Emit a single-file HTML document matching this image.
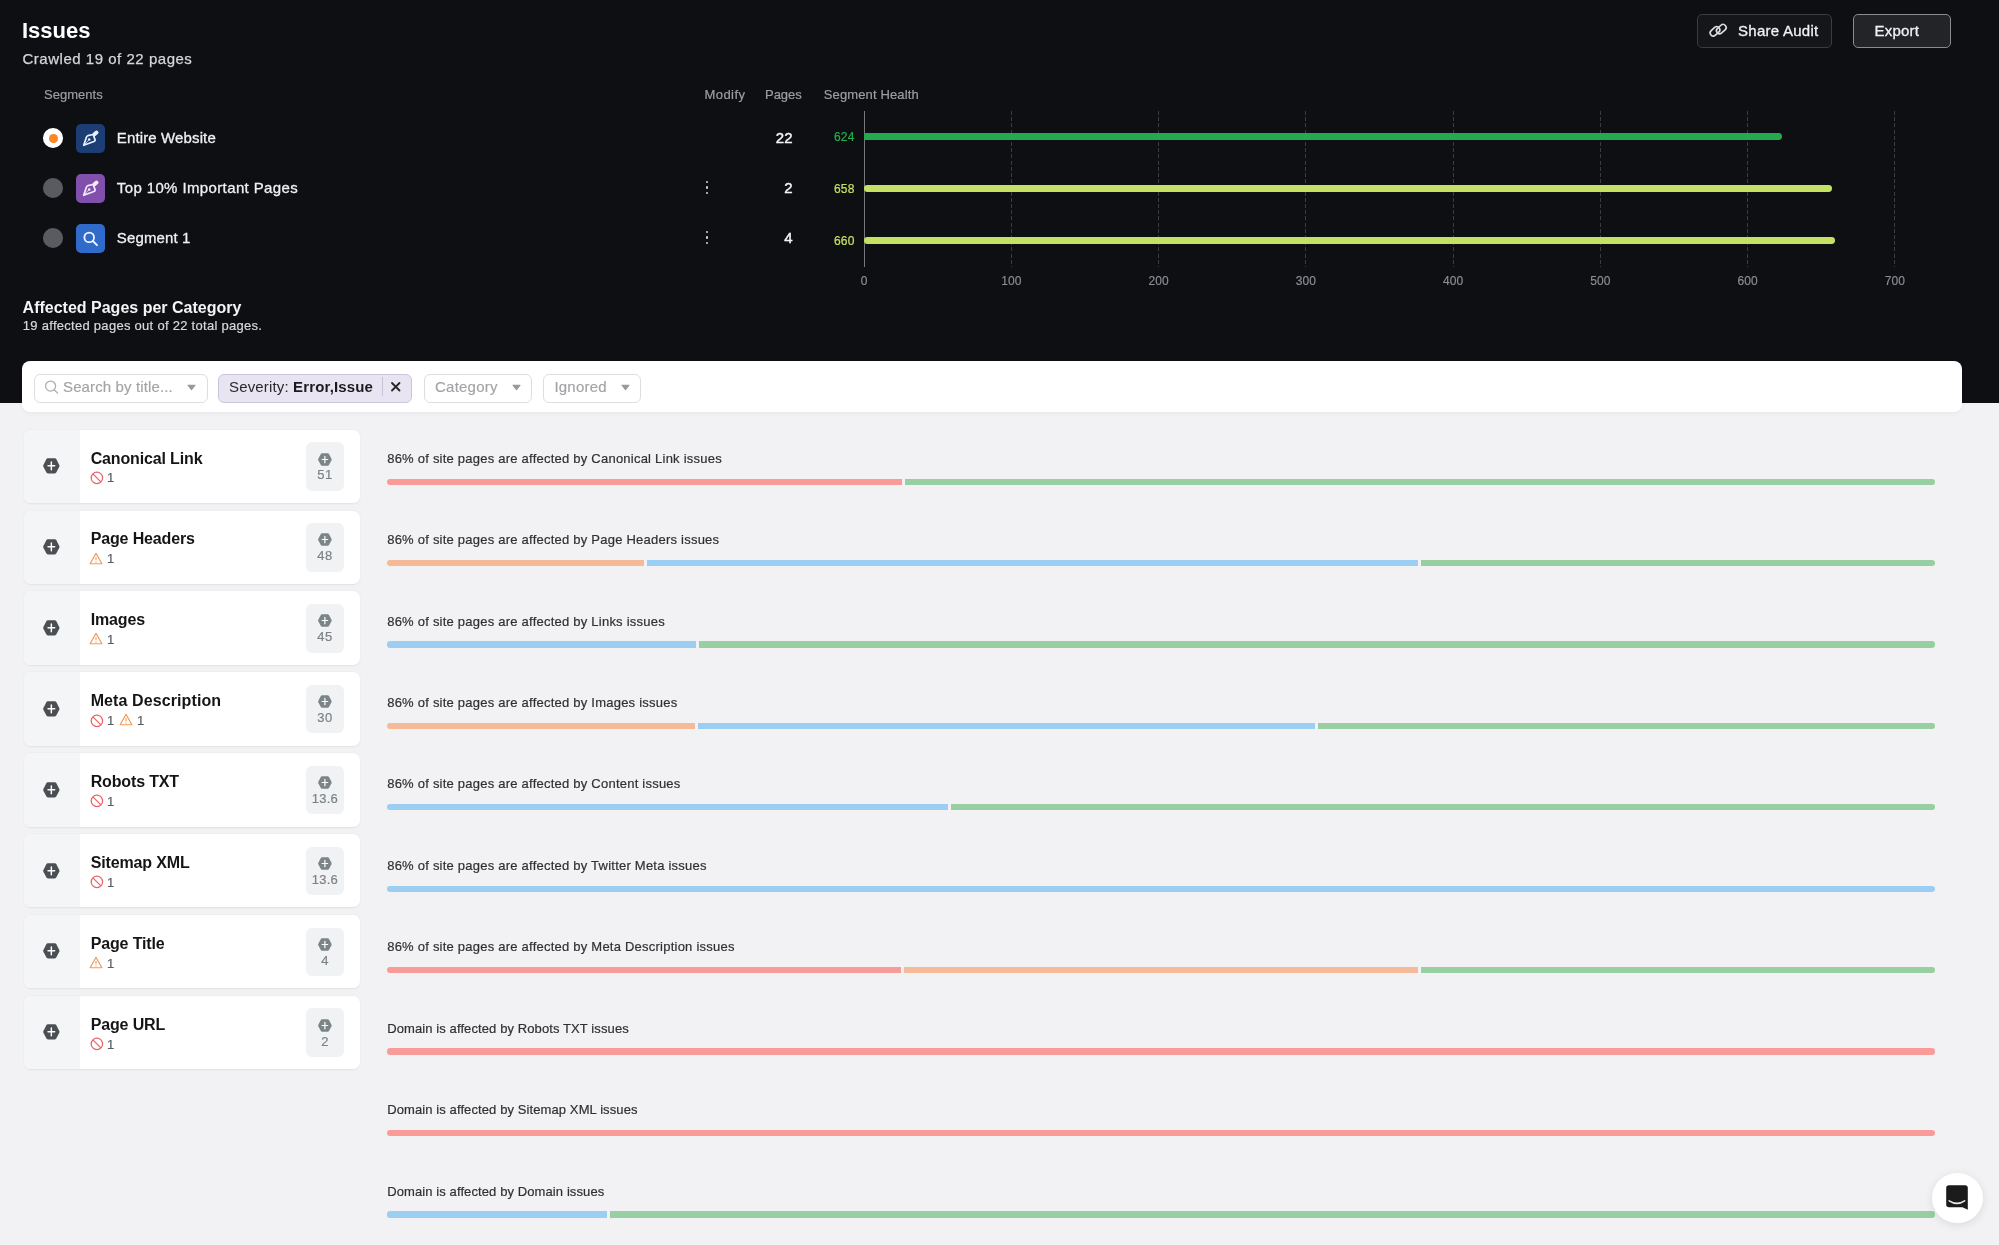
<!DOCTYPE html>
<html><head><meta charset="utf-8"><style>
html,body{margin:0;padding:0;width:1999px;height:1245px;overflow:hidden;background:#f2f2f4;font-family:"Liberation Sans", sans-serif;}
.t{position:absolute;white-space:nowrap;}
.r{position:absolute;box-sizing:border-box;}
svg{position:absolute;overflow:visible;}
</style></head><body><div id="root" style="position:absolute;left:0;top:0;width:1999px;height:1245px;will-change:transform;">
<div class="r" style="left:0px;top:0px;width:1999px;height:403px;background:#0e0f13;border-radius:0px;"></div>
<div class="t" style="left:22px;top:20.18px;font-size:22px;line-height:22px;color:#ffffff;font-weight:700;letter-spacing:0px;">Issues</div>
<div class="t" style="left:22.5px;top:51.30px;font-size:15px;line-height:15px;color:#d6d6d8;font-weight:400;letter-spacing:0.52px;-webkit-text-stroke:0.25px #d6d6d8;">Crawled 19 of 22 pages</div>
<div class="r" style="left:1696.5px;top:13.5px;width:135.5px;height:34px;background:#15161a;border-radius:5px;border:1px solid #3b3c42;"></div>
<div class="t" style="left:1738px;top:22.80px;font-size:15px;line-height:15px;color:#f2f2f2;font-weight:400;letter-spacing:0.27px;-webkit-text-stroke:0.3px #f2f2f2;">Share Audit</div>
<svg style="left:1703px;top:17px" width="30" height="26" viewBox="0 0 30 26">
<g fill="none" stroke="#dedee0" stroke-width="1.6" stroke-linecap="round">
<rect x="6.6" y="11.2" width="10.8" height="6.2" rx="3.1" transform="rotate(-42 12.0 14.3)"/>
<rect x="12.9" y="9.0" width="10.8" height="6.2" rx="3.1" transform="rotate(-42 18.3 12.1)"/>
</g></svg>
<div class="r" style="left:1852.5px;top:13.5px;width:98px;height:34px;background:#232428;border-radius:5px;border:1px solid #8a8b90;"></div>
<div class="t" style="left:1874.5px;top:22.80px;font-size:15px;line-height:15px;color:#f2f2f2;font-weight:400;letter-spacing:0.22px;-webkit-text-stroke:0.3px #f2f2f2;">Export</div>
<div class="t" style="left:44px;top:88.00px;font-size:13px;line-height:13px;color:#9d9ea3;font-weight:400;letter-spacing:0.03px;-webkit-text-stroke:0.2px #9d9ea3;">Segments</div>
<div class="t" style="left:704.4px;top:88.40px;font-size:13px;line-height:13px;color:#9d9ea3;font-weight:400;letter-spacing:0.48px;-webkit-text-stroke:0.2px #9d9ea3;">Modify</div>
<div class="t" style="left:765px;top:88.40px;font-size:13px;line-height:13px;color:#9d9ea3;font-weight:400;letter-spacing:-0.03px;-webkit-text-stroke:0.2px #9d9ea3;">Pages</div>
<div class="t" style="left:823.75px;top:88.40px;font-size:13px;line-height:13px;color:#9d9ea3;font-weight:400;letter-spacing:0.13px;-webkit-text-stroke:0.2px #9d9ea3;">Segment Health</div>
<div class="r" style="left:43.3px;top:128.2px;width:19.7px;height:19.7px;background:#ffffff;border-radius:9.85px;"></div>
<div class="r" style="left:49.0px;top:134.1px;width:8.5px;height:8.5px;background:#fd8626;border-radius:4.25px;"></div>
<div class="r" style="left:76px;top:124.0px;width:29px;height:29px;background:#1c3e74;border-radius:5px;"></div>
<svg style="left:76px;top:124.0px" width="29" height="29" viewBox="0 0 29 29">
<path d="M7.7 21.3 L10.5 12.9 Q10.9 12 11.8 11.7 L17.2 10.5 L19.1 15.9 Q19.2 16.7 18.6 17.2 Z" fill="none" stroke="#e8f0ff" stroke-width="1.7" stroke-linejoin="round"/>
<path d="M7.7 21.3 L12.6 16.1" stroke="#e8f0ff" stroke-width="0.8"/>
<circle cx="13.2" cy="15.5" r="1.3" fill="#e8f0ff"/>
<rect x="16.3" y="7.5" width="6.4" height="3.8" rx="1.5" fill="#e8f0ff" transform="rotate(-40 19.5 9.4)"/>
</svg>
<div class="t" style="left:116.8px;top:129.80px;font-size:15px;line-height:15px;color:#f0f0f2;font-weight:400;letter-spacing:0.13px;-webkit-text-stroke:0.3px #f0f0f2;">Entire Website</div>
<div class="t" style="right:1206.25px;top:129.80px;font-size:15px;line-height:15px;color:#f4f4f4;font-weight:400;letter-spacing:0.1px;-webkit-text-stroke:0.45px #f4f4f4;">22</div>
<div class="r" style="left:43.3px;top:178.2px;width:19.7px;height:19.7px;background:#5a5b60;border-radius:9.85px;"></div>
<div class="r" style="left:76px;top:174.0px;width:29px;height:29px;background:#8150ac;border-radius:5px;"></div>
<svg style="left:76px;top:174.0px" width="29" height="29" viewBox="0 0 29 29">
<path d="M7.7 21.3 L10.5 12.9 Q10.9 12 11.8 11.7 L17.2 10.5 L19.1 15.9 Q19.2 16.7 18.6 17.2 Z" fill="none" stroke="#f6e8ff" stroke-width="1.7" stroke-linejoin="round"/>
<path d="M7.7 21.3 L12.6 16.1" stroke="#f6e8ff" stroke-width="0.8"/>
<circle cx="13.2" cy="15.5" r="1.3" fill="#f6e8ff"/>
<rect x="16.3" y="7.5" width="6.4" height="3.8" rx="1.5" fill="#f6e8ff" transform="rotate(-40 19.5 9.4)"/>
</svg>
<div class="t" style="left:116.8px;top:179.80px;font-size:15px;line-height:15px;color:#f0f0f2;font-weight:400;letter-spacing:0.38px;-webkit-text-stroke:0.3px #f0f0f2;">Top 10% Important Pages</div>
<div class="t" style="right:1206.25px;top:179.80px;font-size:15px;line-height:15px;color:#f4f4f4;font-weight:400;letter-spacing:0.1px;-webkit-text-stroke:0.45px #f4f4f4;">2</div>
<div class="r" style="left:705.5px;top:181.1px;width:2.4px;height:2.4px;background:#d4d4d7;border-radius:1.2px;"></div>
<div class="r" style="left:705.5px;top:186.4px;width:2.4px;height:2.4px;background:#d4d4d7;border-radius:1.2px;"></div>
<div class="r" style="left:705.5px;top:191.70000000000002px;width:2.4px;height:2.4px;background:#d4d4d7;border-radius:1.2px;"></div>
<div class="r" style="left:43.3px;top:228.2px;width:19.7px;height:19.7px;background:#5a5b60;border-radius:9.85px;"></div>
<div class="r" style="left:76px;top:224.0px;width:29px;height:29px;background:#306bcb;border-radius:5px;"></div>
<svg style="left:76px;top:224.0px" width="29" height="29" viewBox="0 0 29 29">
<circle cx="13.2" cy="13.4" r="4.8" fill="none" stroke="#f2f6ff" stroke-width="1.8"/>
<line x1="16.8" y1="17" x2="21" y2="21.2" stroke="#f2f6ff" stroke-width="1.9" stroke-linecap="round"/>
</svg>
<div class="t" style="left:116.8px;top:229.80px;font-size:15px;line-height:15px;color:#f0f0f2;font-weight:400;letter-spacing:0.14px;-webkit-text-stroke:0.3px #f0f0f2;">Segment 1</div>
<div class="t" style="right:1206.25px;top:229.80px;font-size:15px;line-height:15px;color:#f4f4f4;font-weight:400;letter-spacing:0.1px;-webkit-text-stroke:0.45px #f4f4f4;">4</div>
<div class="r" style="left:705.5px;top:231.1px;width:2.4px;height:2.4px;background:#d4d4d7;border-radius:1.2px;"></div>
<div class="r" style="left:705.5px;top:236.4px;width:2.4px;height:2.4px;background:#d4d4d7;border-radius:1.2px;"></div>
<div class="r" style="left:705.5px;top:241.70000000000002px;width:2.4px;height:2.4px;background:#d4d4d7;border-radius:1.2px;"></div>
<div class="r" style="left:863.6px;top:110.5px;width:1.2px;height:156.5px;background:#77787d;border-radius:0px;"></div>
<div class="r" style="left:1010.9px;top:110.5px;width:1px;height:156.5px;background:repeating-linear-gradient(to bottom,#3a3c42 0 4px,transparent 4px 6.2px);"></div>
<div class="r" style="left:1158.1px;top:110.5px;width:1px;height:156.5px;background:repeating-linear-gradient(to bottom,#3a3c42 0 4px,transparent 4px 6.2px);"></div>
<div class="r" style="left:1305.3px;top:110.5px;width:1px;height:156.5px;background:repeating-linear-gradient(to bottom,#3a3c42 0 4px,transparent 4px 6.2px);"></div>
<div class="r" style="left:1452.6px;top:110.5px;width:1px;height:156.5px;background:repeating-linear-gradient(to bottom,#3a3c42 0 4px,transparent 4px 6.2px);"></div>
<div class="r" style="left:1599.8px;top:110.5px;width:1px;height:156.5px;background:repeating-linear-gradient(to bottom,#3a3c42 0 4px,transparent 4px 6.2px);"></div>
<div class="r" style="left:1747.1px;top:110.5px;width:1px;height:156.5px;background:repeating-linear-gradient(to bottom,#3a3c42 0 4px,transparent 4px 6.2px);"></div>
<div class="r" style="left:1894.3px;top:110.5px;width:1px;height:156.5px;background:repeating-linear-gradient(to bottom,#3a3c42 0 4px,transparent 4px 6.2px);"></div>
<div class="t" style="left:664.1px;width:400px;text-align:center;top:275.34px;font-size:12px;line-height:12px;color:#8d8e93;font-weight:400;letter-spacing:0.1px;-webkit-text-stroke:0.15px #8d8e93;">0</div>
<div class="t" style="left:811.35px;width:400px;text-align:center;top:275.34px;font-size:12px;line-height:12px;color:#8d8e93;font-weight:400;letter-spacing:0.1px;-webkit-text-stroke:0.15px #8d8e93;">100</div>
<div class="t" style="left:958.5999999999999px;width:400px;text-align:center;top:275.34px;font-size:12px;line-height:12px;color:#8d8e93;font-weight:400;letter-spacing:0.1px;-webkit-text-stroke:0.15px #8d8e93;">200</div>
<div class="t" style="left:1105.85px;width:400px;text-align:center;top:275.34px;font-size:12px;line-height:12px;color:#8d8e93;font-weight:400;letter-spacing:0.1px;-webkit-text-stroke:0.15px #8d8e93;">300</div>
<div class="t" style="left:1253.1px;width:400px;text-align:center;top:275.34px;font-size:12px;line-height:12px;color:#8d8e93;font-weight:400;letter-spacing:0.1px;-webkit-text-stroke:0.15px #8d8e93;">400</div>
<div class="t" style="left:1400.35px;width:400px;text-align:center;top:275.34px;font-size:12px;line-height:12px;color:#8d8e93;font-weight:400;letter-spacing:0.1px;-webkit-text-stroke:0.15px #8d8e93;">500</div>
<div class="t" style="left:1547.6px;width:400px;text-align:center;top:275.34px;font-size:12px;line-height:12px;color:#8d8e93;font-weight:400;letter-spacing:0.1px;-webkit-text-stroke:0.15px #8d8e93;">600</div>
<div class="t" style="left:1694.85px;width:400px;text-align:center;top:275.34px;font-size:12px;line-height:12px;color:#8d8e93;font-weight:400;letter-spacing:0.1px;-webkit-text-stroke:0.15px #8d8e93;">700</div>
<div class="r" style="left:864.1px;top:133.4px;width:918.1999999999999px;height:6.8px;background:#24a94e;border-radius:0px;border-radius:0 3.4px 3.4px 0;"></div>
<div class="t" style="right:1144.4px;top:130.94px;font-size:12px;line-height:12px;color:#22b14c;font-weight:400;letter-spacing:0.2px;-webkit-text-stroke:0.2px #22b14c;">624</div>
<div class="r" style="left:864.1px;top:185.2px;width:967.9999999999999px;height:6.8px;background:#c5e163;border-radius:0px;border-radius:3.4px;"></div>
<div class="t" style="right:1144.4px;top:182.74px;font-size:12px;line-height:12px;color:#c5e163;font-weight:400;letter-spacing:0.2px;-webkit-text-stroke:0.2px #c5e163;">658</div>
<div class="r" style="left:864.1px;top:237.2px;width:970.9999999999999px;height:6.8px;background:#c5e163;border-radius:0px;border-radius:3.4px;"></div>
<div class="t" style="right:1144.4px;top:234.74px;font-size:12px;line-height:12px;color:#c5e163;font-weight:400;letter-spacing:0.2px;-webkit-text-stroke:0.2px #c5e163;">660</div>
<div class="t" style="left:22.6px;top:299.96px;font-size:16px;line-height:16px;color:#f4f4f4;font-weight:700;letter-spacing:0px;">Affected Pages per Category</div>
<div class="t" style="left:22.8px;top:318.50px;font-size:13px;line-height:13px;color:#d8d8da;font-weight:400;letter-spacing:0.28px;-webkit-text-stroke:0.2px #d8d8da;">19 affected pages out of 22 total pages.</div>
<div class="r" style="left:22px;top:361px;width:1940px;height:51.3px;background:#ffffff;border-radius:8px;box-shadow:0 1px 4px rgba(0,0,0,0.05);"></div>
<div class="r" style="left:33.5px;top:373.5px;width:174px;height:29.3px;background:#ffffff;border-radius:6px;border:1px solid #dedee1;"></div>
<svg style="left:44px;top:379px" width="16" height="16" viewBox="0 0 16 16">
<circle cx="6.6" cy="7.1" r="5" fill="none" stroke="#adadb1" stroke-width="1.25"/>
<line x1="10.2" y1="10.7" x2="13.6" y2="14.1" stroke="#adadb1" stroke-width="1.3" stroke-linecap="round"/>
</svg>
<div class="t" style="left:63px;top:379.30px;font-size:15px;line-height:15px;color:#a3a3a7;font-weight:400;letter-spacing:0.13px;-webkit-text-stroke:0.15px #a3a3a7;">Search by title...</div>
<svg style="left:187.3px;top:384.3px" width="9" height="7" viewBox="0 0 9 7"><path d="M1 1.2 L8 1.2 L4.5 5.6 Z" fill="#98989c" stroke="#98989c" stroke-width="1.1" stroke-linejoin="round"/></svg>
<div class="r" style="left:218px;top:373.5px;width:193.5px;height:29.3px;background:#e8e4f1;border-radius:6px;border:1px solid #cbc5dc;"></div>
<div class="t" style="left:229px;top:379.30px;font-size:15px;line-height:15px;color:#2a2a2e;font-weight:400;letter-spacing:0.15px;">Severity: <b style="font-weight:700;color:#1b1b1f">Error,Issue</b></div>
<div class="r" style="left:381.8px;top:377px;width:1px;height:19px;background:#c8c3d6;border-radius:0px;"></div>
<svg style="left:390.5px;top:382.2px" width="9.5" height="9.5" viewBox="0 0 9.5 9.5">
<path d="M1 1 L8.5 8.5 M8.5 1 L1 8.5" stroke="#27262b" stroke-width="1.85" stroke-linecap="round"/>
</svg>
<div class="r" style="left:423.7px;top:373.5px;width:108.3px;height:29.3px;background:#ffffff;border-radius:6px;border:1px solid #dedee1;"></div>
<div class="t" style="left:435px;top:379.30px;font-size:15px;line-height:15px;color:#a3a3a7;font-weight:400;letter-spacing:0.23px;-webkit-text-stroke:0.15px #a3a3a7;">Category</div>
<svg style="left:511.5px;top:384.3px" width="9" height="7" viewBox="0 0 9 7"><path d="M1 1.2 L8 1.2 L4.5 5.6 Z" fill="#98989c" stroke="#98989c" stroke-width="1.1" stroke-linejoin="round"/></svg>
<div class="r" style="left:543px;top:373.5px;width:98px;height:29.3px;background:#ffffff;border-radius:6px;border:1px solid #dedee1;"></div>
<div class="t" style="left:554.4px;top:379.30px;font-size:15px;line-height:15px;color:#a3a3a7;font-weight:400;letter-spacing:0.23px;-webkit-text-stroke:0.15px #a3a3a7;">Ignored</div>
<svg style="left:620.8px;top:384.3px" width="9" height="7" viewBox="0 0 9 7"><path d="M1 1.2 L8 1.2 L4.5 5.6 Z" fill="#98989c" stroke="#98989c" stroke-width="1.1" stroke-linejoin="round"/></svg>
<div class="r" style="left:23.5px;top:429.6px;width:336px;height:73.4px;background:#ffffff;border-radius:7px;box-shadow:0 0.5px 2px rgba(0,0,0,0.07);"></div>
<div class="r" style="left:23.5px;top:429.6px;width:56.5px;height:73.4px;background:#f4f5f7;border-radius:0px;border-radius:7px 0 0 7px;"></div>
<svg style="left:43.1px;top:458.0px" width="16.7" height="15.7" viewBox="0 0 17 16">
<path d="M4.9 0.3 H12.1 Q13.0 0.3 13.5 1.1 L16.6 7.1 Q17 8 16.6 8.9 L13.5 14.9 Q13.0 15.7 12.1 15.7 H4.9 Q4.0 15.7 3.5 14.9 L0.4 8.9 Q0 8 0.4 7.1 L3.5 1.1 Q4.0 0.3 4.9 0.3 Z" fill="#4b4e53"/>
<path d="M8.5 4.1 V11.9 M5.1 8 H11.9" stroke="#ffffff" stroke-width="1.5" stroke-linecap="round"/>
</svg>
<div class="t" style="left:90.7px;top:450.56px;font-size:16px;line-height:16px;color:#151518;font-weight:700;letter-spacing:-0.15px;">Canonical Link</div>
<svg style="left:89.8px;top:470.8px" width="14" height="14" viewBox="0 0 14 14">
<circle cx="6.9" cy="6.9" r="5.7" fill="none" stroke="#e8636a" stroke-width="1.25"/>
<line x1="2.9" y1="2.9" x2="10.9" y2="10.9" stroke="#e8636a" stroke-width="1.25"/>
</svg>
<div class="t" style="left:107px;top:471.30px;font-size:13px;line-height:13px;color:#5c5d61;font-weight:400;letter-spacing:0px;-webkit-text-stroke:0.2px #5c5d61;">1</div>
<div class="r" style="left:306px;top:442.1px;width:37.5px;height:48.7px;background:#f1f2f3;border-radius:6px;"></div>
<svg style="left:318.2px;top:452.5px" width="13.8" height="13" viewBox="0 0 17 16">
<path d="M4.9 0.3 H12.1 Q13.0 0.3 13.5 1.1 L16.6 7.1 Q17 8 16.6 8.9 L13.5 14.9 Q13.0 15.7 12.1 15.7 H4.9 Q4.0 15.7 3.5 14.9 L0.4 8.9 Q0 8 0.4 7.1 L3.5 1.1 Q4.0 0.3 4.9 0.3 Z" fill="#7b8588"/>
<path d="M8.5 4.1 V11.9 M5.1 8 H11.9" stroke="#ffffff" stroke-width="1.5" stroke-linecap="round"/>
</svg>
<div class="t" style="left:124.89999999999998px;width:400px;text-align:center;top:468.40px;font-size:13px;line-height:13px;color:#7b8387;font-weight:400;letter-spacing:0.3px;-webkit-text-stroke:0.2px #7b8387;">51</div>
<div class="r" style="left:23.5px;top:510.5px;width:336px;height:73.4px;background:#ffffff;border-radius:7px;box-shadow:0 0.5px 2px rgba(0,0,0,0.07);"></div>
<div class="r" style="left:23.5px;top:510.5px;width:56.5px;height:73.4px;background:#f4f5f7;border-radius:0px;border-radius:7px 0 0 7px;"></div>
<svg style="left:43.1px;top:538.9px" width="16.7" height="15.7" viewBox="0 0 17 16">
<path d="M4.9 0.3 H12.1 Q13.0 0.3 13.5 1.1 L16.6 7.1 Q17 8 16.6 8.9 L13.5 14.9 Q13.0 15.7 12.1 15.7 H4.9 Q4.0 15.7 3.5 14.9 L0.4 8.9 Q0 8 0.4 7.1 L3.5 1.1 Q4.0 0.3 4.9 0.3 Z" fill="#4b4e53"/>
<path d="M8.5 4.1 V11.9 M5.1 8 H11.9" stroke="#ffffff" stroke-width="1.5" stroke-linecap="round"/>
</svg>
<div class="t" style="left:90.7px;top:531.46px;font-size:16px;line-height:16px;color:#151518;font-weight:700;letter-spacing:-0.15px;">Page Headers</div>
<svg style="left:89.4px;top:551.5px" width="14" height="13" viewBox="0 0 14 13">
<path d="M7 1.4 L12.9 11.7 H1.1 Z" fill="none" stroke="#f39a5a" stroke-width="1.15" stroke-linejoin="round"/>
<line x1="7" y1="5" x2="7" y2="8.2" stroke="#f39a5a" stroke-width="1.1"/>
<circle cx="7" cy="9.9" r="0.65" fill="#f39a5a"/>
</svg>
<div class="t" style="left:107px;top:552.20px;font-size:13px;line-height:13px;color:#5c5d61;font-weight:400;letter-spacing:0px;-webkit-text-stroke:0.2px #5c5d61;">1</div>
<div class="r" style="left:306px;top:523.0px;width:37.5px;height:48.7px;background:#f1f2f3;border-radius:6px;"></div>
<svg style="left:318.2px;top:533.4px" width="13.8" height="13" viewBox="0 0 17 16">
<path d="M4.9 0.3 H12.1 Q13.0 0.3 13.5 1.1 L16.6 7.1 Q17 8 16.6 8.9 L13.5 14.9 Q13.0 15.7 12.1 15.7 H4.9 Q4.0 15.7 3.5 14.9 L0.4 8.9 Q0 8 0.4 7.1 L3.5 1.1 Q4.0 0.3 4.9 0.3 Z" fill="#7b8588"/>
<path d="M8.5 4.1 V11.9 M5.1 8 H11.9" stroke="#ffffff" stroke-width="1.5" stroke-linecap="round"/>
</svg>
<div class="t" style="left:124.89999999999998px;width:400px;text-align:center;top:549.30px;font-size:13px;line-height:13px;color:#7b8387;font-weight:400;letter-spacing:0.3px;-webkit-text-stroke:0.2px #7b8387;">48</div>
<div class="r" style="left:23.5px;top:591.4000000000001px;width:336px;height:73.4px;background:#ffffff;border-radius:7px;box-shadow:0 0.5px 2px rgba(0,0,0,0.07);"></div>
<div class="r" style="left:23.5px;top:591.4000000000001px;width:56.5px;height:73.4px;background:#f4f5f7;border-radius:0px;border-radius:7px 0 0 7px;"></div>
<svg style="left:43.1px;top:619.8000000000001px" width="16.7" height="15.7" viewBox="0 0 17 16">
<path d="M4.9 0.3 H12.1 Q13.0 0.3 13.5 1.1 L16.6 7.1 Q17 8 16.6 8.9 L13.5 14.9 Q13.0 15.7 12.1 15.7 H4.9 Q4.0 15.7 3.5 14.9 L0.4 8.9 Q0 8 0.4 7.1 L3.5 1.1 Q4.0 0.3 4.9 0.3 Z" fill="#4b4e53"/>
<path d="M8.5 4.1 V11.9 M5.1 8 H11.9" stroke="#ffffff" stroke-width="1.5" stroke-linecap="round"/>
</svg>
<div class="t" style="left:90.7px;top:612.36px;font-size:16px;line-height:16px;color:#151518;font-weight:700;letter-spacing:-0.15px;">Images</div>
<svg style="left:89.4px;top:632.4000000000001px" width="14" height="13" viewBox="0 0 14 13">
<path d="M7 1.4 L12.9 11.7 H1.1 Z" fill="none" stroke="#f39a5a" stroke-width="1.15" stroke-linejoin="round"/>
<line x1="7" y1="5" x2="7" y2="8.2" stroke="#f39a5a" stroke-width="1.1"/>
<circle cx="7" cy="9.9" r="0.65" fill="#f39a5a"/>
</svg>
<div class="t" style="left:107px;top:633.10px;font-size:13px;line-height:13px;color:#5c5d61;font-weight:400;letter-spacing:0px;-webkit-text-stroke:0.2px #5c5d61;">1</div>
<div class="r" style="left:306px;top:603.9000000000001px;width:37.5px;height:48.7px;background:#f1f2f3;border-radius:6px;"></div>
<svg style="left:318.2px;top:614.3000000000001px" width="13.8" height="13" viewBox="0 0 17 16">
<path d="M4.9 0.3 H12.1 Q13.0 0.3 13.5 1.1 L16.6 7.1 Q17 8 16.6 8.9 L13.5 14.9 Q13.0 15.7 12.1 15.7 H4.9 Q4.0 15.7 3.5 14.9 L0.4 8.9 Q0 8 0.4 7.1 L3.5 1.1 Q4.0 0.3 4.9 0.3 Z" fill="#7b8588"/>
<path d="M8.5 4.1 V11.9 M5.1 8 H11.9" stroke="#ffffff" stroke-width="1.5" stroke-linecap="round"/>
</svg>
<div class="t" style="left:124.89999999999998px;width:400px;text-align:center;top:630.20px;font-size:13px;line-height:13px;color:#7b8387;font-weight:400;letter-spacing:0.3px;-webkit-text-stroke:0.2px #7b8387;">45</div>
<div class="r" style="left:23.5px;top:672.3000000000001px;width:336px;height:73.4px;background:#ffffff;border-radius:7px;box-shadow:0 0.5px 2px rgba(0,0,0,0.07);"></div>
<div class="r" style="left:23.5px;top:672.3000000000001px;width:56.5px;height:73.4px;background:#f4f5f7;border-radius:0px;border-radius:7px 0 0 7px;"></div>
<svg style="left:43.1px;top:700.7px" width="16.7" height="15.7" viewBox="0 0 17 16">
<path d="M4.9 0.3 H12.1 Q13.0 0.3 13.5 1.1 L16.6 7.1 Q17 8 16.6 8.9 L13.5 14.9 Q13.0 15.7 12.1 15.7 H4.9 Q4.0 15.7 3.5 14.9 L0.4 8.9 Q0 8 0.4 7.1 L3.5 1.1 Q4.0 0.3 4.9 0.3 Z" fill="#4b4e53"/>
<path d="M8.5 4.1 V11.9 M5.1 8 H11.9" stroke="#ffffff" stroke-width="1.5" stroke-linecap="round"/>
</svg>
<div class="t" style="left:90.7px;top:693.26px;font-size:16px;line-height:16px;color:#151518;font-weight:700;letter-spacing:0.1px;">Meta Description</div>
<svg style="left:89.8px;top:713.5000000000001px" width="14" height="14" viewBox="0 0 14 14">
<circle cx="6.9" cy="6.9" r="5.7" fill="none" stroke="#e8636a" stroke-width="1.25"/>
<line x1="2.9" y1="2.9" x2="10.9" y2="10.9" stroke="#e8636a" stroke-width="1.25"/>
</svg>
<div class="t" style="left:107px;top:714.00px;font-size:13px;line-height:13px;color:#5c5d61;font-weight:400;letter-spacing:0px;-webkit-text-stroke:0.2px #5c5d61;">1</div>
<svg style="left:119.4px;top:713.3000000000001px" width="14" height="13" viewBox="0 0 14 13">
<path d="M7 1.4 L12.9 11.7 H1.1 Z" fill="none" stroke="#f39a5a" stroke-width="1.15" stroke-linejoin="round"/>
<line x1="7" y1="5" x2="7" y2="8.2" stroke="#f39a5a" stroke-width="1.1"/>
<circle cx="7" cy="9.9" r="0.65" fill="#f39a5a"/>
</svg>
<div class="t" style="left:137px;top:714.00px;font-size:13px;line-height:13px;color:#5c5d61;font-weight:400;letter-spacing:0px;-webkit-text-stroke:0.2px #5c5d61;">1</div>
<div class="r" style="left:306px;top:684.8000000000001px;width:37.5px;height:48.7px;background:#f1f2f3;border-radius:6px;"></div>
<svg style="left:318.2px;top:695.2px" width="13.8" height="13" viewBox="0 0 17 16">
<path d="M4.9 0.3 H12.1 Q13.0 0.3 13.5 1.1 L16.6 7.1 Q17 8 16.6 8.9 L13.5 14.9 Q13.0 15.7 12.1 15.7 H4.9 Q4.0 15.7 3.5 14.9 L0.4 8.9 Q0 8 0.4 7.1 L3.5 1.1 Q4.0 0.3 4.9 0.3 Z" fill="#7b8588"/>
<path d="M8.5 4.1 V11.9 M5.1 8 H11.9" stroke="#ffffff" stroke-width="1.5" stroke-linecap="round"/>
</svg>
<div class="t" style="left:124.89999999999998px;width:400px;text-align:center;top:711.10px;font-size:13px;line-height:13px;color:#7b8387;font-weight:400;letter-spacing:0.3px;-webkit-text-stroke:0.2px #7b8387;">30</div>
<div class="r" style="left:23.5px;top:753.2px;width:336px;height:73.4px;background:#ffffff;border-radius:7px;box-shadow:0 0.5px 2px rgba(0,0,0,0.07);"></div>
<div class="r" style="left:23.5px;top:753.2px;width:56.5px;height:73.4px;background:#f4f5f7;border-radius:0px;border-radius:7px 0 0 7px;"></div>
<svg style="left:43.1px;top:781.6px" width="16.7" height="15.7" viewBox="0 0 17 16">
<path d="M4.9 0.3 H12.1 Q13.0 0.3 13.5 1.1 L16.6 7.1 Q17 8 16.6 8.9 L13.5 14.9 Q13.0 15.7 12.1 15.7 H4.9 Q4.0 15.7 3.5 14.9 L0.4 8.9 Q0 8 0.4 7.1 L3.5 1.1 Q4.0 0.3 4.9 0.3 Z" fill="#4b4e53"/>
<path d="M8.5 4.1 V11.9 M5.1 8 H11.9" stroke="#ffffff" stroke-width="1.5" stroke-linecap="round"/>
</svg>
<div class="t" style="left:90.7px;top:774.16px;font-size:16px;line-height:16px;color:#151518;font-weight:700;letter-spacing:-0.15px;">Robots TXT</div>
<svg style="left:89.8px;top:794.4000000000001px" width="14" height="14" viewBox="0 0 14 14">
<circle cx="6.9" cy="6.9" r="5.7" fill="none" stroke="#e8636a" stroke-width="1.25"/>
<line x1="2.9" y1="2.9" x2="10.9" y2="10.9" stroke="#e8636a" stroke-width="1.25"/>
</svg>
<div class="t" style="left:107px;top:794.90px;font-size:13px;line-height:13px;color:#5c5d61;font-weight:400;letter-spacing:0px;-webkit-text-stroke:0.2px #5c5d61;">1</div>
<div class="r" style="left:306px;top:765.7px;width:37.5px;height:48.7px;background:#f1f2f3;border-radius:6px;"></div>
<svg style="left:318.2px;top:776.1px" width="13.8" height="13" viewBox="0 0 17 16">
<path d="M4.9 0.3 H12.1 Q13.0 0.3 13.5 1.1 L16.6 7.1 Q17 8 16.6 8.9 L13.5 14.9 Q13.0 15.7 12.1 15.7 H4.9 Q4.0 15.7 3.5 14.9 L0.4 8.9 Q0 8 0.4 7.1 L3.5 1.1 Q4.0 0.3 4.9 0.3 Z" fill="#7b8588"/>
<path d="M8.5 4.1 V11.9 M5.1 8 H11.9" stroke="#ffffff" stroke-width="1.5" stroke-linecap="round"/>
</svg>
<div class="t" style="left:124.89999999999998px;width:400px;text-align:center;top:792.00px;font-size:13px;line-height:13px;color:#7b8387;font-weight:400;letter-spacing:0.3px;-webkit-text-stroke:0.2px #7b8387;">13.6</div>
<div class="r" style="left:23.5px;top:834.1px;width:336px;height:73.4px;background:#ffffff;border-radius:7px;box-shadow:0 0.5px 2px rgba(0,0,0,0.07);"></div>
<div class="r" style="left:23.5px;top:834.1px;width:56.5px;height:73.4px;background:#f4f5f7;border-radius:0px;border-radius:7px 0 0 7px;"></div>
<svg style="left:43.1px;top:862.5px" width="16.7" height="15.7" viewBox="0 0 17 16">
<path d="M4.9 0.3 H12.1 Q13.0 0.3 13.5 1.1 L16.6 7.1 Q17 8 16.6 8.9 L13.5 14.9 Q13.0 15.7 12.1 15.7 H4.9 Q4.0 15.7 3.5 14.9 L0.4 8.9 Q0 8 0.4 7.1 L3.5 1.1 Q4.0 0.3 4.9 0.3 Z" fill="#4b4e53"/>
<path d="M8.5 4.1 V11.9 M5.1 8 H11.9" stroke="#ffffff" stroke-width="1.5" stroke-linecap="round"/>
</svg>
<div class="t" style="left:90.7px;top:855.06px;font-size:16px;line-height:16px;color:#151518;font-weight:700;letter-spacing:-0.15px;">Sitemap XML</div>
<svg style="left:89.8px;top:875.3000000000001px" width="14" height="14" viewBox="0 0 14 14">
<circle cx="6.9" cy="6.9" r="5.7" fill="none" stroke="#e8636a" stroke-width="1.25"/>
<line x1="2.9" y1="2.9" x2="10.9" y2="10.9" stroke="#e8636a" stroke-width="1.25"/>
</svg>
<div class="t" style="left:107px;top:875.80px;font-size:13px;line-height:13px;color:#5c5d61;font-weight:400;letter-spacing:0px;-webkit-text-stroke:0.2px #5c5d61;">1</div>
<div class="r" style="left:306px;top:846.6px;width:37.5px;height:48.7px;background:#f1f2f3;border-radius:6px;"></div>
<svg style="left:318.2px;top:857.0px" width="13.8" height="13" viewBox="0 0 17 16">
<path d="M4.9 0.3 H12.1 Q13.0 0.3 13.5 1.1 L16.6 7.1 Q17 8 16.6 8.9 L13.5 14.9 Q13.0 15.7 12.1 15.7 H4.9 Q4.0 15.7 3.5 14.9 L0.4 8.9 Q0 8 0.4 7.1 L3.5 1.1 Q4.0 0.3 4.9 0.3 Z" fill="#7b8588"/>
<path d="M8.5 4.1 V11.9 M5.1 8 H11.9" stroke="#ffffff" stroke-width="1.5" stroke-linecap="round"/>
</svg>
<div class="t" style="left:124.89999999999998px;width:400px;text-align:center;top:872.90px;font-size:13px;line-height:13px;color:#7b8387;font-weight:400;letter-spacing:0.3px;-webkit-text-stroke:0.2px #7b8387;">13.6</div>
<div class="r" style="left:23.5px;top:915.0px;width:336px;height:73.4px;background:#ffffff;border-radius:7px;box-shadow:0 0.5px 2px rgba(0,0,0,0.07);"></div>
<div class="r" style="left:23.5px;top:915.0px;width:56.5px;height:73.4px;background:#f4f5f7;border-radius:0px;border-radius:7px 0 0 7px;"></div>
<svg style="left:43.1px;top:943.4px" width="16.7" height="15.7" viewBox="0 0 17 16">
<path d="M4.9 0.3 H12.1 Q13.0 0.3 13.5 1.1 L16.6 7.1 Q17 8 16.6 8.9 L13.5 14.9 Q13.0 15.7 12.1 15.7 H4.9 Q4.0 15.7 3.5 14.9 L0.4 8.9 Q0 8 0.4 7.1 L3.5 1.1 Q4.0 0.3 4.9 0.3 Z" fill="#4b4e53"/>
<path d="M8.5 4.1 V11.9 M5.1 8 H11.9" stroke="#ffffff" stroke-width="1.5" stroke-linecap="round"/>
</svg>
<div class="t" style="left:90.7px;top:935.96px;font-size:16px;line-height:16px;color:#151518;font-weight:700;letter-spacing:-0.15px;">Page Title</div>
<svg style="left:89.4px;top:956.0px" width="14" height="13" viewBox="0 0 14 13">
<path d="M7 1.4 L12.9 11.7 H1.1 Z" fill="none" stroke="#f39a5a" stroke-width="1.15" stroke-linejoin="round"/>
<line x1="7" y1="5" x2="7" y2="8.2" stroke="#f39a5a" stroke-width="1.1"/>
<circle cx="7" cy="9.9" r="0.65" fill="#f39a5a"/>
</svg>
<div class="t" style="left:107px;top:956.70px;font-size:13px;line-height:13px;color:#5c5d61;font-weight:400;letter-spacing:0px;-webkit-text-stroke:0.2px #5c5d61;">1</div>
<div class="r" style="left:306px;top:927.5px;width:37.5px;height:48.7px;background:#f1f2f3;border-radius:6px;"></div>
<svg style="left:318.2px;top:937.9px" width="13.8" height="13" viewBox="0 0 17 16">
<path d="M4.9 0.3 H12.1 Q13.0 0.3 13.5 1.1 L16.6 7.1 Q17 8 16.6 8.9 L13.5 14.9 Q13.0 15.7 12.1 15.7 H4.9 Q4.0 15.7 3.5 14.9 L0.4 8.9 Q0 8 0.4 7.1 L3.5 1.1 Q4.0 0.3 4.9 0.3 Z" fill="#7b8588"/>
<path d="M8.5 4.1 V11.9 M5.1 8 H11.9" stroke="#ffffff" stroke-width="1.5" stroke-linecap="round"/>
</svg>
<div class="t" style="left:124.89999999999998px;width:400px;text-align:center;top:953.80px;font-size:13px;line-height:13px;color:#7b8387;font-weight:400;letter-spacing:0.3px;-webkit-text-stroke:0.2px #7b8387;">4</div>
<div class="r" style="left:23.5px;top:995.9000000000001px;width:336px;height:73.4px;background:#ffffff;border-radius:7px;box-shadow:0 0.5px 2px rgba(0,0,0,0.07);"></div>
<div class="r" style="left:23.5px;top:995.9000000000001px;width:56.5px;height:73.4px;background:#f4f5f7;border-radius:0px;border-radius:7px 0 0 7px;"></div>
<svg style="left:43.1px;top:1024.3000000000002px" width="16.7" height="15.7" viewBox="0 0 17 16">
<path d="M4.9 0.3 H12.1 Q13.0 0.3 13.5 1.1 L16.6 7.1 Q17 8 16.6 8.9 L13.5 14.9 Q13.0 15.7 12.1 15.7 H4.9 Q4.0 15.7 3.5 14.9 L0.4 8.9 Q0 8 0.4 7.1 L3.5 1.1 Q4.0 0.3 4.9 0.3 Z" fill="#4b4e53"/>
<path d="M8.5 4.1 V11.9 M5.1 8 H11.9" stroke="#ffffff" stroke-width="1.5" stroke-linecap="round"/>
</svg>
<div class="t" style="left:90.7px;top:1016.86px;font-size:16px;line-height:16px;color:#151518;font-weight:700;letter-spacing:-0.15px;">Page URL</div>
<svg style="left:89.8px;top:1037.1000000000001px" width="14" height="14" viewBox="0 0 14 14">
<circle cx="6.9" cy="6.9" r="5.7" fill="none" stroke="#e8636a" stroke-width="1.25"/>
<line x1="2.9" y1="2.9" x2="10.9" y2="10.9" stroke="#e8636a" stroke-width="1.25"/>
</svg>
<div class="t" style="left:107px;top:1037.60px;font-size:13px;line-height:13px;color:#5c5d61;font-weight:400;letter-spacing:0px;-webkit-text-stroke:0.2px #5c5d61;">1</div>
<div class="r" style="left:306px;top:1008.4000000000001px;width:37.5px;height:48.7px;background:#f1f2f3;border-radius:6px;"></div>
<svg style="left:318.2px;top:1018.8000000000001px" width="13.8" height="13" viewBox="0 0 17 16">
<path d="M4.9 0.3 H12.1 Q13.0 0.3 13.5 1.1 L16.6 7.1 Q17 8 16.6 8.9 L13.5 14.9 Q13.0 15.7 12.1 15.7 H4.9 Q4.0 15.7 3.5 14.9 L0.4 8.9 Q0 8 0.4 7.1 L3.5 1.1 Q4.0 0.3 4.9 0.3 Z" fill="#7b8588"/>
<path d="M8.5 4.1 V11.9 M5.1 8 H11.9" stroke="#ffffff" stroke-width="1.5" stroke-linecap="round"/>
</svg>
<div class="t" style="left:124.89999999999998px;width:400px;text-align:center;top:1034.70px;font-size:13px;line-height:13px;color:#7b8387;font-weight:400;letter-spacing:0.3px;-webkit-text-stroke:0.2px #7b8387;">2</div>
<div class="t" style="left:387.2px;top:451.75px;font-size:13px;line-height:13px;color:#2f3033;font-weight:400;letter-spacing:0.23px;-webkit-text-stroke:0.2px #2f3033;">86% of site pages are affected by Canonical Link issues</div>
<div class="r" style="left:386.5px;top:478.50px;width:1548px;height:6.3px;display:flex;gap:3px;"><div style="flex:1 1 0;background:#f89b99;border-radius:3.2px 0 0 3.2px;"></div><div style="flex:2 2 0;background:#97cea2;border-radius:0 3.2px 3.2px 0;"></div></div>
<div class="t" style="left:387.2px;top:533.17px;font-size:13px;line-height:13px;color:#2f3033;font-weight:400;letter-spacing:0.23px;-webkit-text-stroke:0.2px #2f3033;">86% of site pages are affected by Page Headers issues</div>
<div class="r" style="left:386.5px;top:559.92px;width:1548px;height:6.3px;display:flex;gap:3px;"><div style="flex:1 1 0;background:#f5ba98;border-radius:3.2px 0 0 3.2px;"></div><div style="flex:3 3 0;background:#9ccdf2;"></div><div style="flex:2 2 0;background:#97cea2;border-radius:0 3.2px 3.2px 0;"></div></div>
<div class="t" style="left:387.2px;top:614.59px;font-size:13px;line-height:13px;color:#2f3033;font-weight:400;letter-spacing:0.23px;-webkit-text-stroke:0.2px #2f3033;">86% of site pages are affected by Links issues</div>
<div class="r" style="left:386.5px;top:641.34px;width:1548px;height:6.3px;display:flex;gap:3px;"><div style="flex:1 1 0;background:#9ccdf2;border-radius:3.2px 0 0 3.2px;"></div><div style="flex:4 4 0;background:#97cea2;border-radius:0 3.2px 3.2px 0;"></div></div>
<div class="t" style="left:387.2px;top:696.01px;font-size:13px;line-height:13px;color:#2f3033;font-weight:400;letter-spacing:0.23px;-webkit-text-stroke:0.2px #2f3033;">86% of site pages are affected by Images issues</div>
<div class="r" style="left:386.5px;top:722.76px;width:1548px;height:6.3px;display:flex;gap:3px;"><div style="flex:1 1 0;background:#f5ba98;border-radius:3.2px 0 0 3.2px;"></div><div style="flex:2 2 0;background:#9ccdf2;"></div><div style="flex:2 2 0;background:#97cea2;border-radius:0 3.2px 3.2px 0;"></div></div>
<div class="t" style="left:387.2px;top:777.43px;font-size:13px;line-height:13px;color:#2f3033;font-weight:400;letter-spacing:0.23px;-webkit-text-stroke:0.2px #2f3033;">86% of site pages are affected by Content issues</div>
<div class="r" style="left:386.5px;top:804.18px;width:1548px;height:6.3px;display:flex;gap:3px;"><div style="flex:4 4 0;background:#9ccdf2;border-radius:3.2px 0 0 3.2px;"></div><div style="flex:7 7 0;background:#97cea2;border-radius:0 3.2px 3.2px 0;"></div></div>
<div class="t" style="left:387.2px;top:858.85px;font-size:13px;line-height:13px;color:#2f3033;font-weight:400;letter-spacing:0.23px;-webkit-text-stroke:0.2px #2f3033;">86% of site pages are affected by Twitter Meta issues</div>
<div class="r" style="left:386.5px;top:885.60px;width:1548px;height:6.3px;display:flex;gap:3px;"><div style="flex:1 1 0;background:#9ccdf2;border-radius:3.2px;"></div></div>
<div class="t" style="left:387.2px;top:940.27px;font-size:13px;line-height:13px;color:#2f3033;font-weight:400;letter-spacing:0.23px;-webkit-text-stroke:0.2px #2f3033;">86% of site pages are affected by Meta Description issues</div>
<div class="r" style="left:386.5px;top:967.02px;width:1548px;height:6.3px;display:flex;gap:3px;"><div style="flex:1 1 0;background:#f89b99;border-radius:3.2px 0 0 3.2px;"></div><div style="flex:1 1 0;background:#f5ba98;"></div><div style="flex:1 1 0;background:#97cea2;border-radius:0 3.2px 3.2px 0;"></div></div>
<div class="t" style="left:387.2px;top:1021.69px;font-size:13px;line-height:13px;color:#2f3033;font-weight:400;letter-spacing:0.1px;-webkit-text-stroke:0.2px #2f3033;">Domain is affected by Robots TXT issues</div>
<div class="r" style="left:386.5px;top:1048.44px;width:1548px;height:6.3px;display:flex;gap:3px;"><div style="flex:1 1 0;background:#f89b99;border-radius:3.2px;"></div></div>
<div class="t" style="left:387.2px;top:1103.11px;font-size:13px;line-height:13px;color:#2f3033;font-weight:400;letter-spacing:0.1px;-webkit-text-stroke:0.2px #2f3033;">Domain is affected by Sitemap XML issues</div>
<div class="r" style="left:386.5px;top:1129.86px;width:1548px;height:6.3px;display:flex;gap:3px;"><div style="flex:1 1 0;background:#f89b99;border-radius:3.2px;"></div></div>
<div class="t" style="left:387.2px;top:1184.53px;font-size:13px;line-height:13px;color:#2f3033;font-weight:400;letter-spacing:0.1px;-webkit-text-stroke:0.2px #2f3033;">Domain is affected by Domain issues</div>
<div class="r" style="left:386.5px;top:1211.28px;width:1548px;height:6.3px;display:flex;gap:3px;"><div style="flex:1 1 0;background:#9ccdf2;border-radius:3.2px 0 0 3.2px;"></div><div style="flex:6 6 0;background:#97cea2;border-radius:0 3.2px 3.2px 0;"></div></div>
<div class="r" style="left:1932px;top:1172.5px;width:50.5px;height:50.5px;background:#ffffff;border-radius:25.25px;box-shadow:0 2px 10px rgba(0,0,0,0.10);"></div>
<svg style="left:1946px;top:1185px" width="22" height="25" viewBox="0 0 22 25">
<path d="M3 0.2 H19 Q21.8 0.2 21.8 3 V24.8 L16.5 22.3 H3 Q0.2 22.3 0.2 19.5 V3 Q0.2 0.2 3 0.2 Z" fill="#1b1b1b"/>
<path d="M3.2 15.8 Q11 21 18.6 15.8" fill="none" stroke="#e6e6e6" stroke-width="1.6" stroke-linecap="round"/>
</svg>
</div></body></html>
